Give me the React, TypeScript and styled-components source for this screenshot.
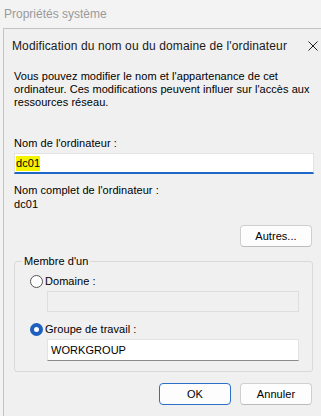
import React from "react";
import styled, { createGlobalStyle } from "styled-components";

const GlobalStyle = createGlobalStyle`
  html, body { margin: 0; padding: 0; background: #f3f3f3; overflow: hidden; }
  body { font-family: "Liberation Sans", Arial, sans-serif; font-size: 11px; color: #000; }
`;

const Page = styled.div`
  width: 321px;
  height: 416px;
  display: flex;
  flex-direction: column;
  overflow: hidden;
`;

const OuterTitle = styled.div`
  height: 28px;
  line-height: 28px;
  padding-left: 4px;
  font-size: 12px;
  color: #9a9a9a;
`;

const Dialog = styled.div`
  margin-left: 3px;
  flex: 1;
  border-top: 1px solid #c4c4c4;
  border-left: 1px solid #c4c4c4;
  background: #f0f0f0;
  display: flex;
  flex-direction: column;
`;

const DialogTitle = styled.div`
  height: 31px;
  display: flex;
  align-items: center;
  padding-left: 8px;
  font-size: 12px;
  color: #1a1a1a;
`;

const TitleText = styled.span`
  width: 296px;
  padding-top: 2px;
  letter-spacing: 0.12px;
`;

const CloseIcon = styled.svg`
  width: 10px;
  height: 10px;
  margin-top: 2px;
`;

const Content = styled.div`
  width: 300px;
  margin-left: 10px;
  display: flex;
  flex-direction: column;
  padding-top: 10px;
  letter-spacing: 0.05px;
`;

const Para = styled.p<{ $mt?: number }>`
  margin: ${(p) => p.$mt ?? 0}px 0 0 0;
  line-height: 13px;
  color: #000;
`;

const TextBox = styled.div<{ $focused?: boolean; $disabled?: boolean; $w?: number; $ml?: number; $mt?: number; $h?: number }>`
  box-sizing: border-box;
  height: ${(p) => p.$h ?? 21}px;
  width: ${(p) => p.$w ?? 300}px;
  margin-left: ${(p) => p.$ml ?? 0}px;
  margin-top: ${(p) => p.$mt ?? 0}px;
  background: ${(p) => (p.$disabled ? "#f0f0f0" : "#ffffff")};
  border: 1px solid ${(p) => (p.$disabled ? "#dedede" : "#e3e3e3")};
  border-bottom: ${(p) => (p.$focused ? "2px solid #1f66c9" : p.$disabled ? "1px solid #dedede" : "1px solid #8a8a8a")};
  display: flex;
  align-items: center;
  padding-left: 1px;
  font-size: 11px;
`;

const Highlight = styled.span`
  background: #f4f400;
  padding: 1px 0;
  line-height: 13px;
`;

const WGText = styled.span`
  padding-left: 2px;
`;

const ButtonRow = styled.div<{ $mt: number }>`
  display: flex;
  justify-content: flex-end;
  gap: 9px;
  margin-top: ${(p) => p.$mt}px;
  padding-right: 2px;
`;

const Button = styled.div<{ $default?: boolean }>`
  box-sizing: border-box;
  width: 72px;
  height: 22px;
  border-radius: 4px;
  background: #fdfdfd;
  border: 1px solid ${(p) => (p.$default ? "#2c6fc9" : "#d0d0d0")};
  border-bottom-color: ${(p) => (p.$default ? "#2c6fc9" : "#bcbcbc")};
  display: flex;
  align-items: center;
  justify-content: center;
  font-size: 11px;
  color: #000;
`;

const Group = styled.fieldset`
  margin: 8px 0 0 0;
  padding: 2px 0 10px 15px;
  border: 1px solid #d9d9d9;
  border-radius: 3px;
  width: 299px;
  box-sizing: border-box;
  display: flex;
  flex-direction: column;
`;

const Legend = styled.legend`
  padding: 0 2px;
  margin-left: -8px;
  line-height: 13px;
`;

const RadioRow = styled.div<{ $mt?: number }>`
  display: flex;
  align-items: center;
  gap: 2px;
  height: 14px;
  margin-top: ${(p) => p.$mt ?? 0}px;
`;

const Radio = styled.span<{ $checked?: boolean }>`
  box-sizing: border-box;
  width: 13px;
  height: 13px;
  border-radius: 50%;
  border: ${(p) => (p.$checked ? "4px solid #1e5fc0" : "1px solid #555")};
  background: #fff;
`;

export default function App() {
  return (
    <Page>
      <GlobalStyle />
      <OuterTitle>Propriétés système</OuterTitle>
      <Dialog>
        <DialogTitle>
          <TitleText>Modification du nom ou du domaine de l'ordinateur</TitleText>
          <CloseIcon viewBox="0 0 10 10">
            <path d="M0.5 0.5 L9.5 9.5 M9.5 0.5 L0.5 9.5" stroke="#222" strokeWidth="1" fill="none" />
          </CloseIcon>
        </DialogTitle>
        <Content>
          <Para>
            Vous pouvez modifier le nom et l'appartenance de cet
            <br />
            ordinateur. Ces modifications peuvent influer sur l'accès aux
            <br />
            ressources réseau.
          </Para>
          <Para $mt={28}>Nom de l'ordinateur :</Para>
          <TextBox $focused $mt={3}>
            <Highlight>dc01</Highlight>
          </TextBox>
          <Para $mt={10}>Nom complet de l'ordinateur :</Para>
          <Para $mt={1}>dc01</Para>
          <ButtonRow $mt={14}>
            <Button>Autres...</Button>
          </ButtonRow>
          <Group>
            <Legend>Membre d'un</Legend>
            <RadioRow $mt={4}>
              <Radio />
              <span>Domaine :</span>
            </RadioRow>
            <TextBox $disabled $w={252} $ml={17} $mt={3} />
            <RadioRow $mt={10}>
              <Radio $checked />
              <span>Groupe de travail :</span>
            </RadioRow>
            <TextBox $w={252} $ml={17} $mt={3} $h={22}>
              <WGText>WORKGROUP</WGText>
            </TextBox>
          </Group>
          <ButtonRow $mt={11}>
            <Button $default>OK</Button>
            <Button>Annuler</Button>
          </ButtonRow>
        </Content>
      </Dialog>
    </Page>
  );
}
